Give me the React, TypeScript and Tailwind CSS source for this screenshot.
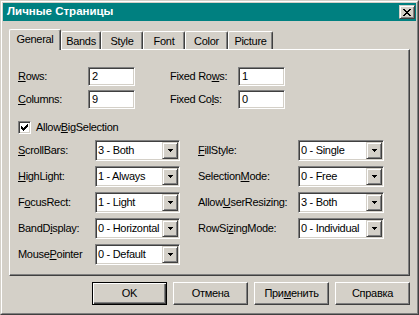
import React from "react";

const F = "font-['Liberation_Sans',Arial,sans-serif]";
const raised =
  "border border-t-white border-l-white border-r-[#404040] border-b-[#404040] shadow-[inset_-1px_-1px_#808080]";
const raisedSmall =
  "border border-t-[#d4d0c8] border-l-[#d4d0c8] border-r-[#404040] border-b-[#404040] shadow-[inset_1px_1px_#ffffff,inset_-1px_-1px_#808080]";
const sunken =
  "border border-t-[#808080] border-l-[#808080] border-r-white border-b-white shadow-[inset_1px_1px_#404040,inset_-1px_-1px_#d4d0c8]";

function Px({ pts }: { pts: [number, number, number][] }) {
  return (
    <>
      {pts.map(([x, y, w], i) => (
        <rect key={i} x={x} y={y} width={w} height={1} fill="#000" />
      ))}
    </>
  );
}

function CloseX() {
  return (
    <svg width="8" height="7" viewBox="0 0 8 7" shapeRendering="crispEdges">
      <Px
        pts={[
          [0, 0, 2], [6, 0, 2],
          [1, 1, 2], [5, 1, 2],
          [2, 2, 4],
          [3, 3, 2],
          [2, 4, 4],
          [1, 5, 2], [5, 5, 2],
          [0, 6, 2], [6, 6, 2],
        ]}
      />
    </svg>
  );
}

function Check() {
  return (
    <svg width="7" height="7" viewBox="0 0 7 7" shapeRendering="crispEdges">
      <Px
        pts={[
          [6, 0, 1],
          [5, 1, 2],
          [0, 2, 1], [4, 2, 3],
          [0, 3, 2], [3, 3, 3],
          [0, 4, 5],
          [1, 5, 3],
          [2, 6, 1],
        ]}
      />
    </svg>
  );
}

function Combo({ value, w }: { value: string; w: string }) {
  return (
    <div className={`${w} h-[21px] bg-white p-[1px] flex items-stretch ${sunken}`}>
      <div className="flex-1 flex items-center pl-[1px] whitespace-nowrap overflow-hidden">{value}</div>
      <div className={`w-[16px] shrink-0 flex items-center justify-center bg-[#d4d0c8] ${raisedSmall}`}>
        <svg width="5" height="3" viewBox="0 0 5 3" shapeRendering="crispEdges">
          <Px pts={[[0, 0, 5], [1, 1, 3], [2, 2, 1]]} />
        </svg>
      </div>
    </div>
  );
}

function Input({ value }: { value: string }) {
  return (
    <div className={`w-[47px] h-[19px] bg-white pl-[3px] flex items-center ${sunken}`}>{value}</div>
  );
}

function Tab({ label, w, selected }: { label: string; w: string; selected?: boolean }) {
  if (selected) {
    return (
      <div
        className={`${w} h-[21px] -mb-px relative z-10 bg-[#d4d0c8] border-l border-t border-r border-t-white border-l-white border-r-[#404040] shadow-[inset_-1px_0_#808080] rounded-t-[2px] flex items-center justify-center pb-[2px]`}
      >
        {label}
      </div>
    );
  }
  return (
    <div
      className={`${w} h-[18px] bg-[#d4d0c8] border-l border-t border-r border-t-white border-l-white border-r-[#404040] shadow-[inset_-1px_0_#808080] rounded-t-[2px] flex items-center justify-center pt-[1px]`}
    >
      {label}
    </div>
  );
}

function Btn({ children, def }: { children: React.ReactNode; def?: boolean }) {
  if (def) {
    return (
      <div className="w-[75px] h-[23px] border border-black shadow-[inset_1px_1px_#ffffff,inset_-1px_-1px_#404040,inset_-2px_-2px_#808080] flex items-center justify-center">
        {children}
      </div>
    );
  }
  return <div className={`w-[75px] h-[23px] ${raised} flex items-center justify-center`}>{children}</div>;
}

function ComboRow({
  l1, v1, l2, v2,
}: { l1: React.ReactNode; v1: string; l2?: React.ReactNode; v2?: string }) {
  return (
    <div className="flex items-center h-[21px]">
      <div className="w-[77px] whitespace-nowrap">{l1}</div>
      <Combo value={v1} w="w-[85px]" />
      {l2 !== undefined && (
        <>
          <div className="ml-[18px] w-[100px] whitespace-nowrap">{l2}</div>
          <Combo value={v2 || ""} w="w-[86px]" />
        </>
      )}
    </div>
  );
}

export default function App() {
  return (
    <div
      className={`w-[419px] h-[315px] ${F} text-[11px] tracking-[-0.3px] text-black border border-t-[#d4d0c8] border-l-[#d4d0c8] border-r-[#404040] border-b-[#404040]`}
    >
      <div className="w-full h-full border border-t-white border-l-white border-r-[#808080] border-b-[#808080] bg-[#d4d0c8] p-[1px] flex flex-col">
        <div className="h-[18px] shrink-0 bg-[#008080] flex items-center justify-between pl-[4px] pr-[1px]">
          <span className="text-white font-bold text-[11.5px] tracking-[0px] leading-none">Личные Страницы</span>
          <div className={`w-[16px] h-[14px] bg-[#d4d0c8] flex items-center justify-center ${raisedSmall}`}>
            <CloseX />
          </div>
        </div>
        <div className="flex-1 flex flex-col px-[6px] pt-[8px]">
          <div className="h-[20px] flex items-end">
            <Tab label="General" w="w-[52px]" selected />
            <Tab label="Bands" w="w-[40px]" />
            <Tab label="Style" w="w-[42px]" />
            <Tab label="Font" w="w-[42px]" />
            <Tab label="Color" w="w-[43px]" />
            <Tab label="Picture" w="w-[45px]" />
          </div>
          <div className="h-[227px] border border-t-white border-l-white border-r-[#404040] border-b-[#404040] shadow-[inset_-1px_-1px_#808080] pl-[8px] pt-[17px] flex flex-col">
            <div className="flex items-center h-[19px]">
              <div className="w-[70px]"><u>R</u>ows:</div>
              <Input value="2" />
              <div className="ml-[35px] w-[68px] whitespace-nowrap">Fixed Ro<u>w</u>s:</div>
              <Input value="1" />
            </div>
            <div className="flex items-center h-[19px] mt-[4px]">
              <div className="w-[70px]"><u>C</u>olumns:</div>
              <Input value="9" />
              <div className="ml-[35px] w-[68px] whitespace-nowrap">Fixed Co<u>l</u>s:</div>
              <Input value="0" />
            </div>
            <div className="flex items-center h-[13px] mt-[12px]">
              <div className={`w-[13px] h-[13px] bg-white flex items-center justify-center ${sunken}`}>
                <Check />
              </div>
              <div className="ml-[5px]">Allow<u>B</u>igSelection</div>
            </div>
            <div className="flex flex-col gap-[5px] mt-[6px]">
              <ComboRow
                l1={<><u>S</u>crollBars:</>}
                v1="3 - Both"
                l2={<><u>F</u>illStyle:</>}
                v2="0 - Single"
              />
              <ComboRow
                l1={<><u>H</u>ighLight:</>}
                v1="1 - Always"
                l2={<>Selection<u>M</u>ode:</>}
                v2="0 - Free"
              />
              <ComboRow
                l1={<>F<u>o</u>cusRect:</>}
                v1="1 - Light"
                l2={<>Allow<u>U</u>serResizing:</>}
                v2="3 - Both"
              />
              <ComboRow
                l1={<>BandD<u>i</u>splay:</>}
                v1="0 - Horizontal"
                l2={<>RowSi<u>z</u>ingMode:</>}
                v2="0 - Individual"
              />
              <ComboRow l1={<>Mouse<u>P</u>ointer</>} v1="0 - Default" />
            </div>
          </div>
          <div className="mt-[6px] flex justify-end gap-[6px]">
            <Btn def>OK</Btn>
            <Btn>Отмена</Btn>
            <Btn>При<u>м</u>енить</Btn>
            <Btn>Справка</Btn>
          </div>
        </div>
      </div>
    </div>
  );
}
